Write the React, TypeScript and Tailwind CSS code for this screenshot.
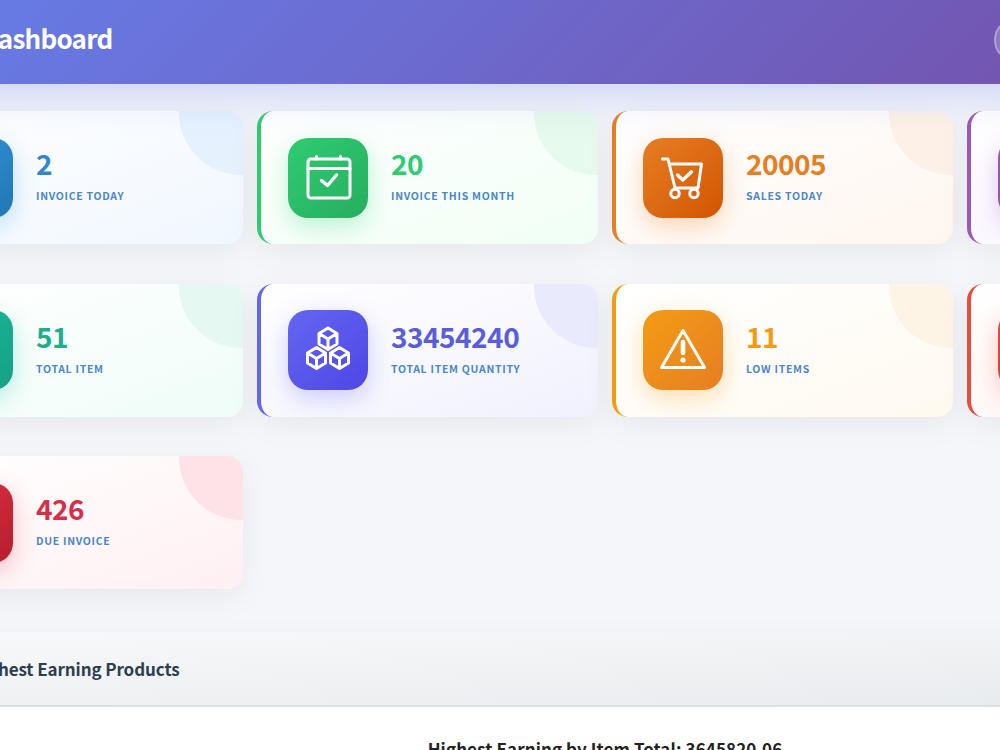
import React from 'react';

const CalendarIcon = () => (
  <svg viewBox="0 0 80 80" className="size-20" fill="none" stroke="white" strokeWidth="3" strokeLinecap="round" strokeLinejoin="round">
    <rect x="20" y="21" width="42" height="39" rx="3" />
    <path d="M20 30.5H62M28.5 18.5V21M52.5 18.5V21" />
    <path d="M33.5 42.5L39.5 47.5L48.5 37" strokeWidth="3.4" />
  </svg>
);

const CartIcon = () => (
  <svg viewBox="0 0 80 80" className="size-20" fill="none" stroke="white" strokeWidth="3" strokeLinecap="round" strokeLinejoin="round">
    <path d="M19.5 21H25L32 50H55L58.5 26H26.5" />
    <circle cx="32" cy="55.5" r="4.2" />
    <circle cx="51" cy="55.5" r="4.2" />
    <path d="M34.5 37L39.8 42L48.5 33.8" strokeWidth="3.4" />
  </svg>
);

const CubesIcon = () => (
  <svg viewBox="0 0 80 80" className="size-20" fill="none" stroke="white" strokeWidth="3" strokeLinecap="round" strokeLinejoin="round">
    <path d="M40 18L49 23.5V34L40 39.5L31 34V23.5ZM31 23.5L40 29L49 23.5M40 29V39.5" />
    <path d="M28.5 37.5L37.5 43V53L28.5 58.5L19.5 53V43ZM19.5 43L28.5 48.5L37.5 43M28.5 48.5V58.5" />
    <path d="M51.5 37.5L60.5 43V53L51.5 58.5L42.5 53V43ZM42.5 43L51.5 48.5L60.5 43M51.5 48.5V58.5" />
  </svg>
);

const WarningIcon = () => (
  <svg viewBox="0 0 80 80" className="size-20" fill="none" stroke="white" strokeWidth="3" strokeLinecap="round" strokeLinejoin="round">
    <path d="M40 20.5L61.5 57.5H18.5Z" />
    <path d="M40 32V43" strokeWidth="4.6" />
    <circle cx="40" cy="50" r="2.6" fill="white" stroke="none" />
  </svg>
);

type Card = { value?: string; label?: string; card: string; icon: string; text?: string; blob: string; svg?: React.ReactNode };

const cards: Card[] = [
  { value: '2', label: 'INVOICE TODAY', card: 'border-l-[#3498db] to-[#f0f7ff]', icon: 'from-[#3498db] to-[#2077b4] shadow-[0_8px_24px_rgba(52,152,219,0.3)]', text: 'text-[#3086cf]', blob: 'bg-[#e5f1fd]' },
  { value: '20', label: 'INVOICE THIS MONTH', card: 'border-l-[#2ecc71] to-[#f0fff5]', icon: 'from-[#2ecc71] to-[#27ae60] shadow-[0_8px_24px_rgba(46,204,113,0.3)]', text: 'text-[#2ecc71]', blob: 'bg-[#e6faed]', svg: <CalendarIcon /> },
  { value: '20005', label: 'SALES TODAY', card: 'border-l-[#e67e22] to-[#fff6ef]', icon: 'from-[#e67e22] to-[#d35400] shadow-[0_8px_24px_rgba(230,126,34,0.3)]', text: 'text-[#e67e22]', blob: 'bg-[#fdf1e7]', svg: <CartIcon /> },
  { card: 'border-l-[#9b59b6] to-[#f8f0ff]', icon: 'from-[#9b59b6] to-[#8e44ad] shadow-[0_8px_24px_rgba(155,89,182,0.3)]', blob: 'bg-[#f3e8fa]' },
  { value: '51', label: 'TOTAL ITEM', card: 'border-l-[#1abc9c] to-[#effdf8]', icon: 'from-[#1abc9c] to-[#16a085] shadow-[0_8px_24px_rgba(26,188,156,0.3)]', text: 'text-[#1fae8c]', blob: 'bg-[#e5f9f2]' },
  { value: '33454240', label: 'TOTAL ITEM QUANTITY', card: 'border-l-[#6366f1] to-[#f1f1fe]', icon: 'from-[#6366f1] to-[#4f46e5] shadow-[0_8px_24px_rgba(99,102,241,0.3)]', text: 'text-[#5a5ddb]', blob: 'bg-[#eaeafd]', svg: <CubesIcon /> },
  { value: '11', label: 'LOW ITEMS', card: 'border-l-[#f39c12] to-[#fffaf0]', icon: 'from-[#f39c12] to-[#e67e22] shadow-[0_8px_24px_rgba(243,156,18,0.3)]', text: 'text-[#f39c12]', blob: 'bg-[#fdf4e5]', svg: <WarningIcon /> },
  { card: 'border-l-[#e74c3c] to-[#fff2f0]', icon: 'from-[#e74c3c] to-[#c0392b] shadow-[0_8px_24px_rgba(231,76,60,0.3)]', blob: 'bg-[#fde6e3]' },
  { value: '426', label: 'DUE INVOICE', card: 'border-l-[#dc3545] to-[#fff0f2]', icon: 'from-[#dc3545] to-[#b81d2e] shadow-[0_8px_24px_rgba(220,53,69,0.3)]', text: 'text-[#d5304a]', blob: 'bg-[#fde3e7]' },
];

const App = () => {
  return (
    <div className="h-[750px] w-[1000px] overflow-hidden bg-[#f4f6fa] font-['Noto_Sans_CJK_SC','Noto_Sans',sans-serif]">
      <div className="ml-[-112px] w-[1434px]">
        {/* Top bar */}
        <header className="relative z-10 flex h-[84px] items-center bg-[linear-gradient(135deg,#667eea,#764ba2)] pb-1 pl-[92px] shadow-[0_10px_40px_rgba(102,126,234,0.3)]">
          <h1 className="mb-1 w-[1014px] text-[26px] leading-[1] font-bold tracking-[-0.75px] text-white">Dashboard</h1>
          <div className="size-11 rounded-full border-2 border-white/30 bg-white/20" />
        </header>

        <main className="px-[14px] pt-[27px]">
          {/* Stat cards */}
          <div className="grid grid-cols-[repeat(4,341px)] gap-x-[14px] gap-y-[39.5px]">
            {cards.map((c, i) => (
              <div key={i} className={'relative flex h-[133px] items-center gap-[23px] overflow-hidden rounded-2xl border-l-4 bg-gradient-to-br from-white pl-[27px] shadow-[0_8px_32px_rgba(0,0,0,0.06)] ' + c.card}>
                <div className={'absolute top-[-60px] right-[-60px] size-[124px] rounded-full ' + c.blob} />
                <div className={'relative size-20 shrink-0 rounded-[20px] bg-gradient-to-br ' + c.icon}>{c.svg}</div>
                {c.value && (
                  <div className="relative mb-[5px]">
                    <div className={'text-[28px] leading-[34px] font-bold tracking-[-0.5px] ' + c.text}>{c.value}</div>
                    <div className="mt-2 text-[10.5px] leading-[16px] font-bold tracking-[0.7px] text-[#4a86c8]">{c.label}</div>
                  </div>
                )}
              </div>
            ))}
          </div>

          {/* Earning section */}
          <section className="mt-[43px] bg-white shadow-[0_4px_20px_rgba(0,0,0,0.05)]">
            <div className="flex h-[75px] items-center border-b-2 border-[#dcdfe3] bg-gradient-to-br from-[#f8f9fa] to-[#e7eaed] pl-[68px]">
              <h2 className="text-[17px] font-bold tracking-[-0.1px] text-[#2c3e50]">Highest Earning Products</h2>
            </div>
            <div className="h-[200px] pt-[30px] text-center text-[17px] leading-[24px] font-bold tracking-[0.1px] text-[#222]">
              Highest Earning by Item Total: 3645820.06
            </div>
          </section>
        </main>
      </div>
    </div>
  );
};

export default App;
